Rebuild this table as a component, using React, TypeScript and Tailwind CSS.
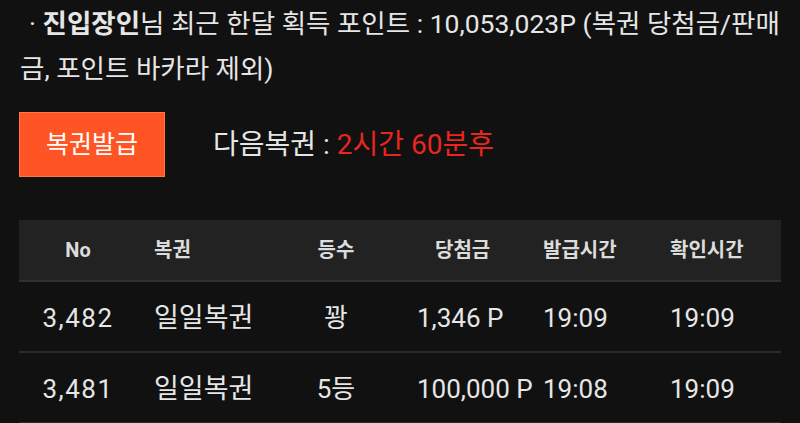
const rows = [
  { no: "3,482", name: "일일복권", rank: "꽝", prize: "1,346 P", issued: "19:09", checked: "19:09" },
  { no: "3,481", name: "일일복권", rank: "5등", prize: "100,000 P", issued: "19:08", checked: "19:09" },
]

const cols = "grid grid-cols-[118px_153px_92px_144px_127px_128px]"

export default function App() {
  return (
    <div className="min-h-[423px] w-[800px] overflow-hidden bg-[#111111] text-[#e6e6e6] font-['Roboto','Noto_Sans_CJK_KR',sans-serif]">
      {/* 포인트 안내 */}
      <p className="whitespace-nowrap px-[20px] pt-[1px] text-[26.5px] leading-[45px]">
        <span className="pl-[9px]">· </span>
        <span className="font-bold">진입장인</span>님 최근 한달 획득 포인트 : 10,053,023P (복권 당첨금/판매
        <br />
        금, 포인트 바카라 제외)
      </p>

      {/* 발급 */}
      <div className="mt-[21px] flex items-center px-[19px]">
        <button className="h-[65px] w-[146px] border border-[#ff7448] bg-[#ff5524] text-[25px] text-white">
          복권발급
        </button>
        <div className="ml-[48px] text-[28px] leading-none">
          다음복권 : <span className="text-[#e8261e]">2시간 60분후</span>
        </div>
      </div>

      {/* 내역 */}
      <div className="mx-[19px] mt-[43px]">
        <div className={`${cols} h-[62px] items-center border-b-2 border-[#303030] bg-[#222222] text-[20px] font-bold text-[#dcdcdc]`}>
          <div className="text-center">No</div>
          <div className="pl-[17px]">복권</div>
          <div className="text-center">등수</div>
          <div className="pl-[53px]">당첨금</div>
          <div className="pl-[17px]">발급시간</div>
          <div className="pl-[17px]">확인시간</div>
        </div>
        {rows.map((r) => (
          <div
            key={r.no}
            className={`${cols} h-[71px] items-center border-b-2 border-[#2a2a2a] pt-[3px] text-[26px]`}
          >
            <div className="text-center tracking-[1.5px]">{r.no}</div>
            <div className="pl-[17px] text-[27px]">{r.name}</div>
            <div className="text-center">{r.rank}</div>
            <div className="pl-[35px] whitespace-nowrap">{r.prize}</div>
            <div className="pl-[17px]">{r.issued}</div>
            <div className="pl-[17px]">{r.checked}</div>
          </div>
        ))}
      </div>
    </div>
  )
}
